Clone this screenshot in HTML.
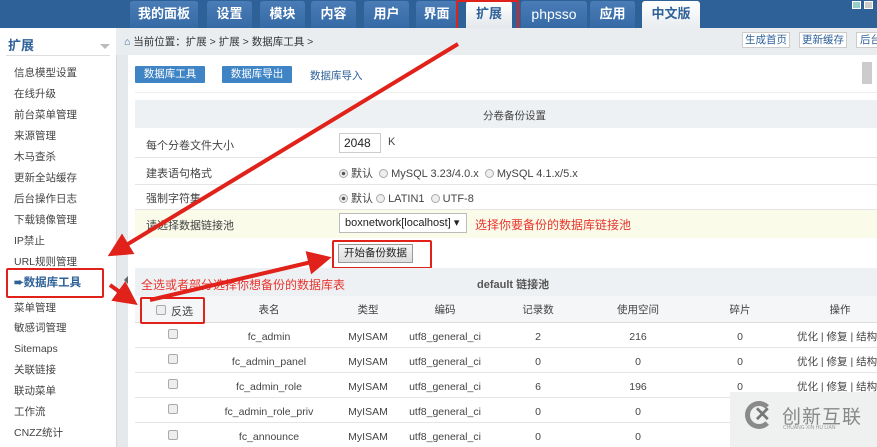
<!DOCTYPE html>
<html><head><meta charset="utf-8"><style>
*{margin:0;padding:0;box-sizing:border-box}
body{width:877px;height:447px;overflow:hidden;background:#fff;font-family:"Liberation Sans","Noto Sans CJK SC",sans-serif;font-size:11px;color:#444;position:relative}
.a{position:absolute;white-space:nowrap}
.top{left:0;top:0;width:877px;height:28px;background:#2f6199}
.tab{top:1px;height:27px;background:linear-gradient(#4a7cb6,#356aa6);color:#fff;font-weight:bold;font-size:13px;text-align:center;line-height:26px;border-radius:3px 3px 0 0}
.side{left:0;top:28px;width:116px;height:419px;background:#fff}
.side div{position:absolute;left:14px;font-size:10.5px;color:#444;line-height:14px;white-space:nowrap}
.spl{left:116px;top:28px;width:12px;height:419px;background:#e6e9ec;border-left:1px solid #d5d9dd}
.bc{left:116px;top:28px;width:761px;height:27px;background:#e9edf0}
.btn{top:66px;height:17px;background:#3f84c5;color:#fff;font-size:10.5px;line-height:17px;text-align:center;border-radius:1px}
.row{left:135px;width:742px;border-bottom:1px solid #e5e5e5}
.c{position:absolute;font-size:10.5px;text-align:center;transform:translateX(-50%);white-space:nowrap;line-height:14px}
.cb{position:absolute;width:10px;height:10px;border:1px solid #aaa;border-radius:2px;background:#eee}
.rd{display:inline-block;width:9px;height:9px;border:1px solid #aaa;border-radius:50%;background:#eee;vertical-align:-1px;margin-right:3px}
.rd.on{background:radial-gradient(#555 30%,#eee 40%)}
.red{color:#e8352c}
.box{border:2px solid #e0221a;border-radius:2px}
.op{position:absolute;left:797px;font-size:10.5px;white-space:nowrap;line-height:14px}
</style></head><body>
<div class="a top"></div>
<div class="a tab" style="left:130px;width:68px">我的面板</div>
<div class="a tab" style="left:207px;width:45px">设置</div>
<div class="a tab" style="left:260px;width:45px">模块</div>
<div class="a tab" style="left:311px;width:45px">内容</div>
<div class="a tab" style="left:364px;width:45px">用户</div>
<div class="a tab" style="left:416px;width:41px">界面</div>
<div class="a tab" style="left:466px;width:46px;background:linear-gradient(#fff,#e4e8ec);color:#2f6199">扩展</div>
<div class="a box" style="left:456px;top:0;width:63px;height:30px"></div>
<div class="a tab" style="left:521px;width:66px;font-weight:normal;font-size:14px">phpsso</div>
<div class="a tab" style="left:590px;width:45px">应用</div>
<div class="a tab" style="left:642px;width:58px;background:linear-gradient(#fff,#e9edf0);color:#2f6199">中文版</div>
<div class="a" style="left:852px;top:1px;width:9px;height:8px;background:#9cc;border:1px solid #fff"></div>
<div class="a" style="left:864px;top:1px;width:9px;height:8px;background:#ccc;border:1px solid #fff"></div>

<div class="a side">
<div style="left:8px;top:10px;font-size:13px;font-weight:bold;color:#2f6199;line-height:16px">扩展</div>
<div style="left:100px;top:16px;width:0;height:0;border:5px solid transparent;border-top:5px solid #bbb"></div>
<div style="left:6px;top:27px;width:104px;height:1px;background:#ddd"></div>
<div style="top:38px">信息模型设置</div><div style="top:59px">在线升级</div><div style="top:80px">前台菜单管理</div>
<div style="top:101px">来源管理</div><div style="top:122px">木马查杀</div><div style="top:143px">更新全站缓存</div>
<div style="top:164px">后台操作日志</div><div style="top:185px">下载镜像管理</div><div style="top:206px">IP禁止</div>
<div style="top:227px">URL规则管理</div>
<div style="top:248px;color:#2f6199;font-weight:bold;font-size:11.5px">➨数据库工具</div>
<div style="top:273px">菜单管理</div><div style="top:293px">敏感词管理</div><div style="top:314px">Sitemaps</div>
<div style="top:335px">关联链接</div><div style="top:356px">联动菜单</div><div style="top:377px">工作流</div><div style="top:398px">CNZZ统计</div>
</div>
<div class="a box" style="left:6px;top:268px;width:98px;height:30px"></div>
<div class="a spl"></div>
<div class="a" style="left:120px;top:276px;border:4px solid transparent;border-right:4px solid #666"></div>
<div class="a bc"></div>
<div class="a" style="left:124px;top:34px;font-size:10.5px;color:#333"><span style="color:#2f6199">⌂</span> 当前位置：扩展 &gt; 扩展 &gt; 数据库工具 &gt;</div>
<div class="a" style="left:742px;top:32px;width:48px;height:16px;border:1px solid #ccc;background:#fff;color:#2f6199;font-size:10.5px;line-height:14px;text-align:center">生成首页</div>
<div class="a" style="left:799px;top:32px;width:48px;height:16px;border:1px solid #ccc;background:#fff;color:#2f6199;font-size:10.5px;line-height:14px;text-align:center">更新缓存</div>
<div class="a" style="left:856px;top:32px;width:30px;height:16px;border:1px solid #ccc;background:#fff;color:#2f6199;font-size:10.5px;line-height:14px;padding-left:3px">后台</div>
<div class="a" style="left:128px;top:55px;width:749px;height:392px;background:#fff"></div>
<div class="a" style="left:862px;top:62px;width:10px;height:22px;background:#ccc"></div>
<div class="a btn" style="left:135px;width:70px">数据库工具</div>
<div class="a btn" style="left:222px;width:70px">数据库导出</div>
<div class="a" style="left:310px;top:68px;color:#2f6199;font-size:10.5px">数据库导入</div>
<div class="a" style="left:135px;top:92px;width:742px;height:1px;background:#eee"></div>

<div class="a" style="left:135px;top:100px;width:742px;height:28px;background:#eef1f4"></div>
<div class="a" style="left:483px;top:108px;font-size:10.5px">分卷备份设置</div>
<div class="a row" style="top:128px;height:30px"></div>
<div class="a" style="left:146px;top:137px">每个分卷文件大小</div>
<div class="a" style="left:339px;top:133px;width:42px;height:20px;border:1px solid #ccc;font-size:12px;line-height:18px;padding-left:4px;color:#222">2048</div>
<div class="a" style="left:388px;top:136px">K</div>
<div class="a row" style="top:158px;height:27px"></div>
<div class="a" style="left:146px;top:165px">建表语句格式</div>
<div class="a" style="left:339px;top:165px"><span class="rd on"></span>默认 &nbsp;<span class="rd"></span>MySQL 3.23/4.0.x &nbsp;<span class="rd"></span>MySQL 4.1.x/5.x</div>
<div class="a row" style="top:185px;height:25px"></div>
<div class="a" style="left:146px;top:190px">强制字符集</div>
<div class="a" style="left:339px;top:190px"><span class="rd on"></span>默认 <span class="rd"></span>LATIN1 &nbsp;<span class="rd"></span>UTF-8</div>
<div class="a" style="left:135px;top:210px;width:742px;height:28px;background:#fbfbea"></div>
<div class="a" style="left:146px;top:217px">请选择数据链接池</div>
<div class="a" style="left:339px;top:213px;width:128px;height:20px;border:1px solid #bbb;background:#fff;font-size:11px;line-height:18px;padding-left:5px;color:#222">boxnetwork[localhost] ▾</div>
<div class="a red" style="left:475px;top:216px;font-size:12px">选择你要备份的数据库链接池</div>
<div class="a" style="left:338px;top:244px;width:75px;height:19px;border:1px solid #999;background:linear-gradient(#f5f5f5,#ddd);font-size:10.5px;line-height:17px;text-align:center;color:#222">开始备份数据</div>
<div class="a box" style="left:332px;top:240px;width:100px;height:29px"></div>

<div class="a" style="left:135px;top:268px;width:742px;height:28px;background:#eef1f4"></div>
<div class="a red" style="left:141px;top:276px;font-size:12px">全选或者部分选择你想备份的数据库表</div>
<div class="a" style="left:477px;top:276px;font-weight:bold;font-size:11px;color:#555">default 链接池</div>
<div class="a row" style="top:296px;height:27px;background:#f4f6f8;border-bottom:1px solid #ddd"></div>
<div class="cb" style="left:156px;top:305px"></div><div class="a" style="left:171px;top:303px">反选</div>
<div class="a box" style="left:140px;top:297px;width:65px;height:27px"></div>
<div class="c" style="left:269px;top:303px">表名</div><div class="c" style="left:368px;top:303px">类型</div><div class="c" style="left:445px;top:303px">编码</div><div class="c" style="left:538px;top:303px">记录数</div><div class="c" style="left:638px;top:303px">使用空间</div><div class="c" style="left:740px;top:303px">碎片</div><div class="c" style="left:840px;top:303px">操作</div>

<div class="a row" style="top:323px;height:25px"></div><div class="a row" style="top:348px;height:25px"></div><div class="a row" style="top:373px;height:25px"></div><div class="a row" style="top:398px;height:25px"></div>
<div class="cb" style="left:168px;top:329px"></div><div class="cb" style="left:168px;top:354px"></div><div class="cb" style="left:168px;top:379px"></div><div class="cb" style="left:168px;top:404px"></div><div class="cb" style="left:168px;top:430px"></div>
<div class="c" style="left:269px;top:330px">fc_admin</div><div class="c" style="left:269px;top:355px">fc_admin_panel</div><div class="c" style="left:269px;top:380px">fc_admin_role</div><div class="c" style="left:269px;top:405px">fc_admin_role_priv</div><div class="c" style="left:269px;top:430px">fc_announce</div>
<div class="c" style="left:368px;top:330px">MyISAM</div><div class="c" style="left:368px;top:355px">MyISAM</div><div class="c" style="left:368px;top:380px">MyISAM</div><div class="c" style="left:368px;top:405px">MyISAM</div><div class="c" style="left:368px;top:430px">MyISAM</div>
<div class="c" style="left:445px;top:330px">utf8_general_ci</div><div class="c" style="left:445px;top:355px">utf8_general_ci</div><div class="c" style="left:445px;top:380px">utf8_general_ci</div><div class="c" style="left:445px;top:405px">utf8_general_ci</div><div class="c" style="left:445px;top:430px">utf8_general_ci</div>
<div class="c" style="left:538px;top:330px">2</div><div class="c" style="left:538px;top:355px">0</div><div class="c" style="left:538px;top:380px">6</div><div class="c" style="left:538px;top:405px">0</div><div class="c" style="left:538px;top:430px">0</div>
<div class="c" style="left:638px;top:330px">216</div><div class="c" style="left:638px;top:355px">0</div><div class="c" style="left:638px;top:380px">196</div><div class="c" style="left:638px;top:405px">0</div><div class="c" style="left:638px;top:430px">0</div>
<div class="c" style="left:740px;top:330px">0</div><div class="c" style="left:740px;top:355px">0</div><div class="c" style="left:740px;top:380px">0</div>
<div class="op" style="top:330px">优化 | 修复 | 结构</div><div class="op" style="top:355px">优化 | 修复 | 结构</div><div class="op" style="top:380px">优化 | 修复 | 结构</div>

<div class="a" style="left:730px;top:392px;width:147px;height:55px;background:rgba(238,239,240,.97)"></div>
<div class="a" style="left:745px;top:401px;width:28px;height:28px;border:5px solid #8a8a8a;border-radius:50%;border-right-color:transparent"></div>
<div class="a" style="left:754px;top:402px;font-size:20px;font-weight:bold;color:#777">✕</div>
<div class="a" style="left:782px;top:402px;font-size:19px;color:#888;letter-spacing:1px">创新互联</div>
<div class="a" style="left:783px;top:425px;font-size:5px;color:#999">CHUANG XIN HU LIAN</div>

<svg class="a" style="left:0;top:0" width="877" height="447">
<defs><marker id="h" markerWidth="6" markerHeight="6" refX="3" refY="3" orient="auto"><path d="M0,0L6,3L0,6z" fill="#e0221a"/></marker></defs>
<g stroke="#e0221a" stroke-width="4" fill="none" marker-end="url(#h)">
<line x1="458" y1="44" x2="118" y2="250"/>
<line x1="150" y1="300" x2="320" y2="260"/>
<line x1="110" y1="285" x2="128" y2="298"/>
</g></svg>
</body></html>
